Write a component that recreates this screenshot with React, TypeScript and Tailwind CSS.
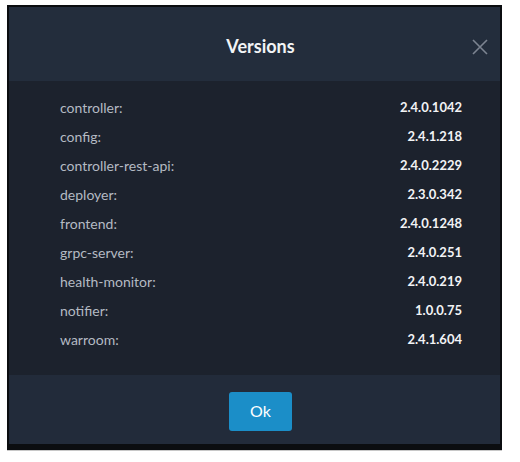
import React from "react";

const rows: [string, string][] = [
  ["controller:", "2.4.0.1042"],
  ["config:", "2.4.1.218"],
  ["controller-rest-api:", "2.4.0.2229"],
  ["deployer:", "2.3.0.342"],
  ["frontend:", "2.4.0.1248"],
  ["grpc-server:", "2.4.0.251"],
  ["health-monitor:", "2.4.0.219"],
  ["notifier:", "1.0.0.75"],
  ["warroom:", "2.4.1.604"],
];

export default function App() {
  return (
    <div className="w-[520px] h-[462px] bg-white pt-[5px] pl-[7px] overflow-hidden" style={{ fontFamily: "Lato, 'Open Sans', sans-serif" }}>
      <div className="w-[495px] h-[445px] flex flex-col border-t-2 border-l-2 border-r-2 border-b-[6px] border-[#0b0d10] shadow-[0_1px_0_#c8c8c8]">
        <div className="h-[74px] bg-[#232d3c] relative flex items-center justify-center pt-[5px] pl-[12px]">
          <span className="text-[18px] font-bold text-[#f2f4f6]">Versions</span>
          <svg className="absolute left-[463px] top-[32px]" width="16" height="16" viewBox="0 0 16 16">
            <path d="M1 1 L15 15 M15 1 L1 15" stroke="#7c8491" strokeWidth="1.6" fill="none" />
          </svg>
        </div>
        <div className="h-[294px] bg-[#1c222d] pt-[12px] pl-[51px] pr-[38px]">
          {rows.map(([k, v]) => (
            <div key={k} className="h-[29px] flex items-center justify-between">
              <span className="text-[14px] text-[#b4bac3]">{k}</span>
              <span className="text-[13px] font-bold text-[#f2f3f5]">{v}</span>
            </div>
          ))}
        </div>
        <div className="flex-1 bg-[#222b3a] flex items-center justify-center pt-[3px] pl-[12px]">
          <button className="w-[63px] h-[39px] rounded-[3px] bg-[#1b8ec8] text-white text-[16px]">Ok</button>
        </div>
      </div>
    </div>
  );
}
